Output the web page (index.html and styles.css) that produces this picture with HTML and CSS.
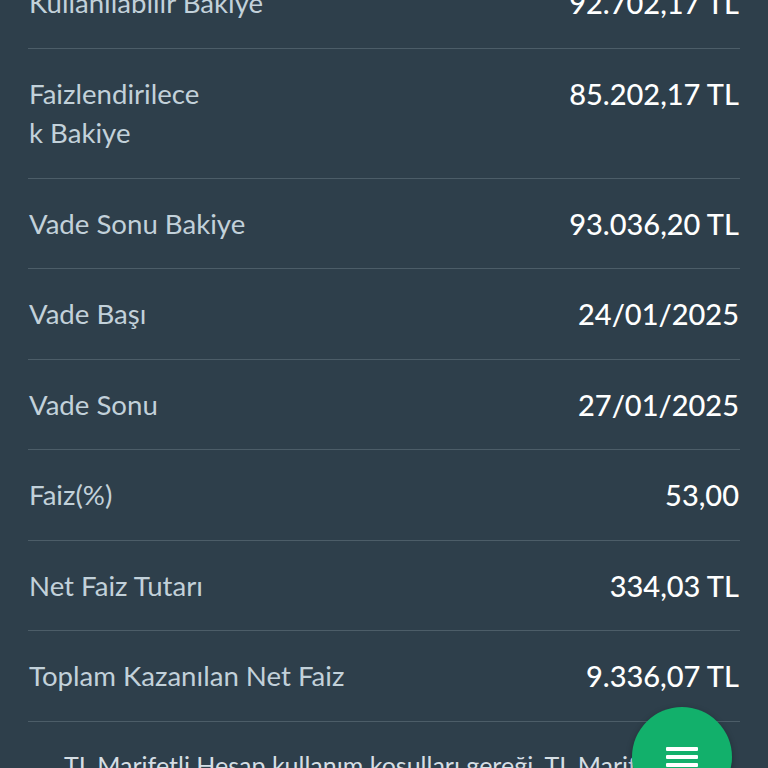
FILE: index.html
```html
<!DOCTYPE html>
<html lang="tr">
<head>
<meta charset="utf-8">
<link rel="stylesheet" href="styles.css">
</head>
<body>
<div class="page">
  <div class="list">
    <div class="row"><div class="label">Kullanılabilir Bakiye</div><div class="value">92.702,17 TL</div></div>
    <div class="row"><div class="label">Faizlendirilece<br>k Bakiye</div><div class="value">85.202,17 TL</div></div>
    <div class="row"><div class="label">Vade Sonu Bakiye</div><div class="value">93.036,20 TL</div></div>
    <div class="row"><div class="label">Vade Başı</div><div class="value">24/01/2025</div></div>
    <div class="row"><div class="label">Vade Sonu</div><div class="value">27/01/2025</div></div>
    <div class="row"><div class="label">Faiz(%)</div><div class="value">53,00</div></div>
    <div class="row"><div class="label">Net Faiz Tutarı</div><div class="value">334,03 TL</div></div>
    <div class="row"><div class="label">Toplam Kazanılan Net Faiz</div><div class="value">9.336,07 TL</div></div>
  </div>
  <p class="note">TL Marifetli Hesap kullanım koşulları gereği, TL Marifetli Hesap faiz getirisi vade sonunda hesabınıza yansıtılır.</p>
</div>
<button class="fab" aria-label="Menü">
  <svg width="32" height="20" viewBox="0 0 32 20"><rect x="0" y="0" width="32" height="4" rx="1" fill="#fff"/><rect x="0" y="8" width="32" height="4" rx="1" fill="#fff"/><rect x="0" y="16" width="32" height="4" rx="1" fill="#fff"/></svg>
</button>
</body>
</html>
```
FILE: styles.css
```css
html, body {
  margin: 0;
  padding: 0;
  background: #2e3f4b;
  height: 768px;
  overflow: hidden;
}
body {
  font-family: Lato, "Open Sans", sans-serif;
}
.page {
  padding: 0 28px;
}
.list {
  margin-top: -42px;
}
.row {
  display: flex;
  justify-content: space-between;
  align-items: flex-start;
  padding: 25px 1px 25px 1px;
  border-bottom: 1.5px solid #4c5d68;
}
.label {
  color: #c2d1da;
  font-size: 27.6px;
  line-height: 39.5px;
}
.value {
  color: #ffffff;
  font-size: 29px;
  font-weight: 500;
  line-height: 39.5px;
  text-align: right;
}
.note {
  margin: 26px 0 0 0;
  padding-left: 36px;
  color: #d5dee4;
  font-size: 25px;
  line-height: 34px;
}
.fab {
  position: absolute;
  left: 632px;
  top: 707px;
  width: 100px;
  height: 100px;
  border-radius: 50%;
  border: none;
  background: #12b06b;
  display: flex;
  align-items: flex-start;
  justify-content: center;
  padding-top: 40px;
  box-shadow: 0 2px 6px rgba(0,0,0,0.3);
}
```
